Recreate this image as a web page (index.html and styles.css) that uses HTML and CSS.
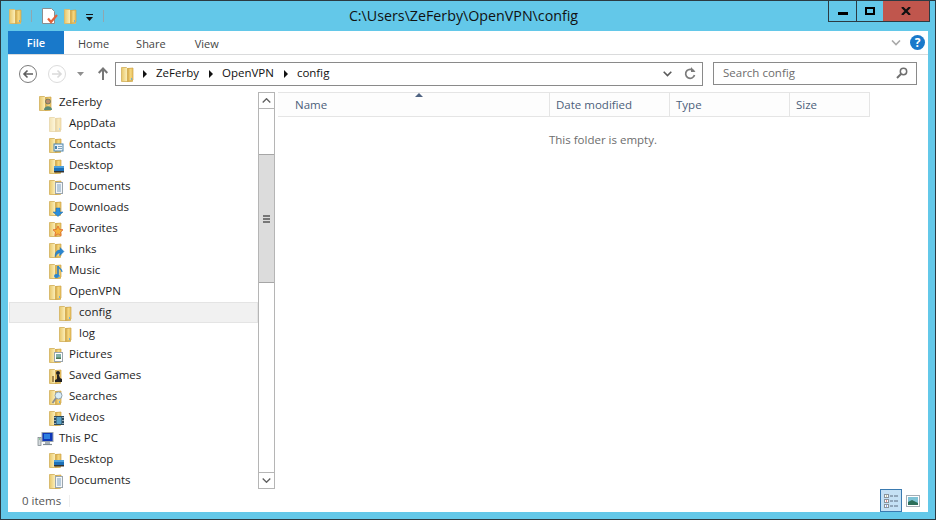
FILE: index.html
```html
<!DOCTYPE html>
<html lang="en">
<head>
<meta charset="utf-8">
<title>config</title>
<link rel="stylesheet" href="styles.css">
</head>
<body>
<svg class="defs" width="0" height="0" aria-hidden="true">
  <defs>
    <linearGradient id="fl" x1="0" x2="1" y1="0" y2="0"><stop offset="0" stop-color="#e8c76a"/><stop offset=".5" stop-color="#fbeeb8"/><stop offset="1" stop-color="#f4dc8e"/></linearGradient>
    <linearGradient id="fr" x1="0" x2="1" y1="0" y2="0"><stop offset="0" stop-color="#cfa03e"/><stop offset=".5" stop-color="#f5d77f"/><stop offset="1" stop-color="#e8c05c"/></linearGradient>
    <symbol id="folder" viewBox="0 0 16 16">
      <path d="M1.500 1.500h5l1 1h5v13h-11z" fill="url(#fl)" stroke="#d9bb6e"/>
      <path d="M7.500 2.500l5.500-.5v12l-5.500 1.500z" fill="url(#fr)" stroke="#cfa548" stroke-width=".7"/>
      <path d="M11 12h1v2h-1z" fill="#6fb2dc"/>
    </symbol>
  </defs>
</svg>
<div class="window">
  <header class="titlebar">
    <div class="qat">
      <svg class="ico" viewBox="0 0 16 16"><use href="#folder"/></svg>
      <span class="qat-sep sep-a"></span>
      <svg class="ico doc" viewBox="0 0 16 16"><path d="M.5.500h9l3 3v12H.5z" fill="#fff" stroke="#8d8d8d"/><path d="M6 10.500l3 3.500 6-7" fill="none" stroke="#e2623a" stroke-width="2.200"/></svg>
      <svg class="ico fold2" viewBox="0 0 16 16"><use href="#folder"/></svg>
      <svg class="qat-drop" viewBox="0 0 7 7"><path d="M0 0h7v1H0zM0 3h7L3.500 7z" fill="#111"/></svg>
      <span class="qat-sep sep-b"></span>
    </div>
    <div class="title">C:\Users\ZeFerby\OpenVPN\config</div>
    <div class="caption">
      <div class="cap cap-min"><span class="glyph-min"></span></div>
      <div class="cap cap-max"><span class="glyph-max"></span></div>
      <div class="cap cap-close"><svg width="10" height="8" viewBox="0 0 10 8"><path d="M1 0l8 8M9 0L1 8" stroke="#111" stroke-width="2.200"/></svg></div>
    </div>
  </header>

  <div class="client">
    <nav class="ribbon">
      <div class="tab-file">File</div>
      <div class="tab tab-home">Home</div>
      <div class="tab tab-share">Share</div>
      <div class="tab tab-view">View</div>
      <svg class="rib-chev" width="10" height="6" viewBox="0 0 10 6"><path d="M1 .5l4 4 4-4" fill="none" stroke="#a9a9a9" stroke-width="1.600"/></svg>
      <div class="help">?</div>
    </nav>

    <div class="navrow">
      <svg class="nav-btn" width="20" height="20" viewBox="0 0 20 20"><circle cx="10" cy="10" r="8.500" fill="#fff" stroke="#7b7b7b"/><path d="M15 10H6M9.500 6.500L6 10l3.500 3.500" fill="none" stroke="#5f5f5f" stroke-width="1.600"/></svg>
      <svg class="nav-btn nav-fwd" width="20" height="20" viewBox="0 0 20 20"><circle cx="10" cy="10" r="8.500" fill="#fff" stroke="#dcdcdc"/><path d="M5 10h9M10.500 6.500L14 10l-3.500 3.500" fill="none" stroke="#dadada" stroke-width="1.600"/></svg>
      <svg class="nav-drop" width="7" height="4" viewBox="0 0 7 4"><path d="M0 0h7L3.500 4z" fill="#8f8f8f"/></svg>
      <svg class="nav-up" width="10" height="13" viewBox="0 0 10 13"><path d="M5 13V2M.7 6L5 1.500 9.300 6" fill="none" stroke="#777" stroke-width="2"/></svg>
      <div class="address">
        <svg class="ico" viewBox="0 0 16 16"><use href="#folder"/></svg>
        <span class="crumb-arrow arrow-first"></span><span class="crumb">ZeFerby</span>
        <span class="crumb-arrow"></span><span class="crumb">OpenVPN</span>
        <span class="crumb-arrow"></span><span class="crumb">config</span>
        <svg class="addr-chev" width="9" height="6" viewBox="0 0 9 6"><path d="M.7.700l3.800 3.800L8.300.700" fill="none" stroke="#5a5a5a" stroke-width="1.600"/></svg>
        <svg class="addr-refresh" width="12" height="13" viewBox="0 0 12 13"><path d="M10 4.500A4.500 4.500 0 1 0 10.500 8" fill="none" stroke="#7b7b7b" stroke-width="1.700"/><path d="M7 0v5h4.500z" fill="#7b7b7b"/></svg>
      </div>
      <div class="search">
        <span class="search-text">Search config</span>
        <svg width="12" height="12" viewBox="0 0 12 12"><circle cx="7.500" cy="4.500" r="3.200" fill="none" stroke="#6f6f6f" stroke-width="1.500"/><path d="M5 7l-4 4" stroke="#6f6f6f" stroke-width="2"/></svg>
      </div>
    </div>

    <main class="panes">
      <div class="tree">
        <div class="row l0"><svg class="ico" viewBox="0 0 16 16"><use href="#folder"/><circle cx="10" cy="6.500" r="2.500" fill="#b98d6c" stroke="#556b5e" stroke-width=".7"/><path d="M6 15c0-5 8-5 8 0z" fill="#5b8a76"/></svg><span>ZeFerby</span></div>
        <div class="row l1"><svg class="ico faded" viewBox="0 0 16 16"><use href="#folder"/></svg><span>AppData</span></div>
        <div class="row l1"><svg class="ico" viewBox="0 0 16 16"><use href="#folder"/><rect x="6" y="7" width="9" height="7" fill="#eef3f8" stroke="#4a84ac"/><path d="M7 9h2v3H7z" fill="#4a84ac"/><path d="M10 9.500h4M10 11.500h4" stroke="#7da3bf"/></svg><span>Contacts</span></div>
        <div class="row l1"><svg class="ico" viewBox="0 0 16 16"><use href="#folder"/><rect x="6" y="8" width="10" height="6" fill="#1c70b8"/><path d="M6 8h10v2H6z" fill="#4da0dc"/><path d="M6 13h10v1.500H6z" fill="#333"/></svg><span>Desktop</span></div>
        <div class="row l1"><svg class="ico" viewBox="0 0 16 16"><use href="#folder"/><rect x="7.500" y="3.500" width="7" height="11" fill="#f4f6f8" stroke="#9aa5ad"/><path d="M9 6h4M9 8h4M9 10h4M9 12h4" stroke="#7aa0c0"/></svg><span>Documents</span></div>
        <div class="row l1"><svg class="ico" viewBox="0 0 16 16"><use href="#folder"/><path d="M8 8h4v4h3l-5 4.500L5 12h3z" fill="#2b8fdc" stroke="#1c69ac" stroke-width=".5"/></svg><span>Downloads</span></div>
        <div class="row l1"><svg class="ico" viewBox="0 0 16 16"><use href="#folder"/><path d="M10 5l1.600 3.400 3.400.400-2.500 2.400.7 3.500-3.200-1.800-3.200 1.800.7-3.500L5 8.800l3.400-.400z" fill="#f5b53c" stroke="#e0662c" stroke-width=".8"/></svg><span>Favorites</span></div>
        <div class="row l1"><svg class="ico" viewBox="0 0 16 16"><use href="#folder"/><path d="M7 15c0-5 2-7 5-7V5.500l4 4-4 4V11c-2 0-3 1-5 4z" fill="#2a86d0" stroke="#1c69ac" stroke-width=".4"/></svg><span>Links</span></div>
        <div class="row l1"><svg class="ico" viewBox="0 0 16 16"><use href="#folder"/><path d="M10 3v10" stroke="#1f75bd" stroke-width="1.500"/><ellipse cx="8.500" cy="13" rx="2.500" ry="2" fill="#2a86d0"/><path d="M10 3c1 3 4 3 4 6" fill="none" stroke="#2a86d0" stroke-width="1.200"/></svg><span>Music</span></div>
        <div class="row l1"><svg class="ico" viewBox="0 0 16 16"><use href="#folder"/></svg><span>OpenVPN</span></div>
        <div class="row l2 row-sel"><svg class="ico" viewBox="0 0 16 16"><use href="#folder"/></svg><span>config</span></div>
        <div class="row l2"><svg class="ico" viewBox="0 0 16 16"><use href="#folder"/></svg><span>log</span></div>
        <div class="row l1"><svg class="ico" viewBox="0 0 16 16"><use href="#folder"/><rect x="6.500" y="5.500" width="8" height="9" fill="#fff" stroke="#9aa5ad"/><rect x="8" y="7" width="5" height="5" fill="#7fb0a8"/><path d="M8 10.500h5V12H8z" fill="#4d7a52"/></svg><span>Pictures</span></div>
        <div class="row l1"><svg class="ico" viewBox="0 0 16 16"><use href="#folder"/><circle cx="10" cy="5" r="2" fill="#222"/><path d="M9 7h2l1 3 2 1v3H7v-2l2-1z" fill="#222"/><path d="M5 8v6" stroke="#8a6a30" stroke-width="1.500"/></svg><span>Saved Games</span></div>
        <div class="row l1"><svg class="ico" viewBox="0 0 16 16"><use href="#folder"/><circle cx="10.500" cy="6.500" r="3.500" fill="#d8ecf6" stroke="#8fa2ad"/><path d="M8 9l-3.500 5" stroke="#8b8f92" stroke-width="1.800"/></svg><span>Searches</span></div>
        <div class="row l1"><svg class="ico" viewBox="0 0 16 16"><use href="#folder"/><rect x="6" y="6" width="10" height="9" fill="#2d4b5e"/><rect x="8.500" y="7" width="5" height="7" fill="#5aa2c8"/><path d="M7 7v1M7 10v1M7 13v1M15 7v1M15 10v1M15 13v1" stroke="#dfe8ee" stroke-width="1.200"/></svg><span>Videos</span></div>
        <div class="row l0"><svg class="ico pc" viewBox="0 0 16 16"><rect x="4" y="1.500" width="11" height="9" fill="#0f37b8" stroke="#9aa4ad"/><path d="M6 3h6v5H6z" fill="#2d7fe0"/><path d="M7 11h5v2H7z" fill="#aab3ba"/><path d="M5 13.500h9" stroke="#7f8a92" stroke-width="1.200"/><rect x="0" y="6.500" width="3" height="8" fill="#d4dadd" stroke="#757f85" stroke-width=".7"/><path d="M1 8h1" stroke="#3eaf4a"/></svg><span>This PC</span></div>
        <div class="row l1"><svg class="ico" viewBox="0 0 16 16"><use href="#folder"/><rect x="6" y="8" width="10" height="6" fill="#1c70b8"/><path d="M6 8h10v2H6z" fill="#4da0dc"/><path d="M6 13h10v1.500H6z" fill="#333"/></svg><span>Desktop</span></div>
        <div class="row l1"><svg class="ico" viewBox="0 0 16 16"><use href="#folder"/><rect x="7.500" y="3.500" width="7" height="11" fill="#f4f6f8" stroke="#9aa5ad"/><path d="M9 6h4M9 8h4M9 10h4M9 12h4" stroke="#7aa0c0"/></svg><span>Documents</span></div>
      </div>

      <div class="scrollbar">
        <div class="sb-btn"><svg width="9" height="5" viewBox="0 0 9 5"><path d="M.7 4.500l3.800-3.800 3.800 3.800" fill="none" stroke="#606060" stroke-width="1.300"/></svg></div>
        <div class="sb-track">
          <div class="sb-thumb"><span class="grip"></span></div>
        </div>
        <div class="sb-btn sb-down"><svg width="9" height="5" viewBox="0 0 9 5"><path d="M.7.500l3.800 3.800L8.300.500" fill="none" stroke="#606060" stroke-width="1.300"/></svg></div>
      </div>

      <section class="list">
        <div class="headers">
          <div class="col col-name">Name<span class="sort"></span></div>
          <div class="col col-date">Date modified</div>
          <div class="col col-type">Type</div>
          <div class="col col-size">Size</div>
        </div>
        <p class="empty">This folder is empty.</p>
      </section>
    </main>

    <footer class="status">
      <span class="count">0 items</span>
      <span class="status-sep"></span>
      <div class="view-btn">
        <svg width="14" height="14" viewBox="0 0 14 14">
          <rect x=".5" y=".5" width="4" height="3" fill="#fff" stroke="#8a949c"/><rect x=".5" y="5.500" width="4" height="3" fill="#fff" stroke="#8a949c"/><rect x=".5" y="10.500" width="4" height="3" fill="#fff" stroke="#8a949c"/>
          <path d="M2 1.500h1v1H2z" fill="#7a8a50"/><path d="M2 6.500h1v1H2z" fill="#d02020"/><path d="M2 11.500h1v1H2z" fill="#1f4fd0"/>
          <path d="M6 2h3M10 2h4M6 7h3M10 7h4M6 12h3M10 12h4" stroke="#5c6c80"/>
        </svg>
      </div>
      <svg class="view-pic" width="14" height="12" viewBox="0 0 14 12"><rect x=".5" y=".5" width="13" height="11" fill="#fff" stroke="#a4adb5"/><rect x="2" y="2" width="10" height="8" fill="#7fc3d6"/><path d="M2 7l4-2 6 3v2H2z" fill="#2c6f5a"/></svg>
    </footer>
  </div>
</div>
</body>
</html>
```
FILE: styles.css
```css
* { box-sizing: border-box; }
html, body { margin: 0; padding: 0; }
body { width: 936px; height: 520px; overflow: hidden; font-family: "Open Sans", "Noto Sans", sans-serif; font-size: 11.500px; color: #1e1e1e; }
.defs { position: absolute; }
.ico { width: 16px; height: 16px; flex: none; display: block; overflow: visible; }
.faded { opacity: .5; }

.window { width: 936px; height: 520px; display: flex; flex-direction: column; background: #63c8e9; border: 1px solid #2b3a42; }

.titlebar { height: 30px; flex: none; display: flex; align-items: flex-start; }
.qat { width: 109px; flex: none; display: flex; align-items: center; height: 30px; padding-left: 7px; }
.qat-sep { width: 1px; height: 12px; background: #8fa7b0; flex: none; }
.sep-a { margin-left: 7px; }
.doc { margin-left: 10px; }
.fold2 { margin-left: 5px; }
.qat-drop { width: 7px; height: 7px; margin-left: 7px; margin-top: 2px; flex: none; }
.sep-b { margin-left: 10px; }
.title { flex: 1; text-align: center; font-size: 14.250px; line-height: 30px; color: #111; padding-right: 11px; white-space: nowrap; }
.caption { display: flex; flex: none; height: 21px; margin-right: 5px; border: 1px solid #2b3a42; border-top: 0; }
.cap { display: flex; align-items: center; justify-content: center; height: 100%; }
.cap-min { width: 28px; border-right: 1px solid #2b3a42; }
.cap-max { width: 26px; }
.cap-close { width: 46px; background: #c0564d; }
.glyph-min { width: 10px; height: 3px; background: #000; margin-top: 5px; }
.glyph-max { width: 10px; height: 8px; border: 2px solid #000; }

.client { flex: 1; min-height: 0; margin: 0 7px 7px; background: #fff; display: flex; flex-direction: column; }

.ribbon { height: 24px; flex: none; display: flex; align-items: center; border-bottom: 1px solid #dadbdc; }
.tab-file { width: 56px; height: 23px; background: #1979ca; color: #fff; font-weight: 600; font-size: 11px; line-height: 23px; text-align: center; flex: none; }
.tab { font-size: 11px; color: #444; flex: none; line-height: 25px; height: 23px; }
.tab-home { margin-left: 14px; }
.tab-share { margin-left: 27px; }
.tab-view { margin-left: 29px; }
.rib-chev { margin-left: auto; flex: none; }
.help { width: 15px; height: 15px; margin: 0 3px 0 9px; border-radius: 50%; background: #1979ca; color: #fff; font-weight: 700; font-size: 12px; line-height: 15px; text-align: center; flex: none; }

.navrow { height: 37px; flex: none; display: flex; align-items: center; padding-left: 10px; }
.nav-btn { flex: none; display: block; }
.nav-fwd { margin-left: 9px; }
.nav-drop { flex: none; margin-left: 10px; }
.nav-up { flex: none; margin-left: 14px; }
.address { width: 588px; height: 24px; margin-left: 7px; border: 1px solid #8a8a8a; display: flex; align-items: center; padding-left: 4px; flex: none; }
.crumb { color: #111; white-space: nowrap; margin-top: -2px; }
.crumb-arrow { width: 0; height: 0; border-left: 4px solid #111; border-top: 4px solid transparent; border-bottom: 4px solid transparent; margin: 0 9px 0 10px; flex: none; }
.arrow-first { margin-left: 7px; }
.addr-chev { margin-left: auto; flex: none; }
.addr-refresh { margin: 0 6px 0 12px; flex: none; }
.search { width: 204px; height: 23px; margin-left: 10px; margin-top: -1px; border: 1px solid #8a8a8a; display: flex; align-items: center; justify-content: space-between; padding: 0 8px 0 9px; flex: none; }
.search-text { color: #6d6d6d; margin-top: -2px; }

.panes { flex: 1; min-height: 0; display: flex; }
.tree { width: 250px; flex: none; overflow: hidden; }
.row { height: 21px; display: flex; align-items: center; gap: 5px; white-space: nowrap; color: #1e1e1e; }
.row span { margin-top: -2px; }
.l0 { padding-left: 30px; }
.l1 { padding-left: 40px; }
.l2 { padding-left: 50px; }
.row-sel { background: #f1f1f1; box-shadow: inset 0 0 0 1px #e4e4e4; margin-left: 1px; padding-left: 49px; }

.scrollbar { width: 17px; flex: none; display: flex; flex-direction: column; border-left: 1px solid #b5b5b5; border-right: 1px solid #b5b5b5; height: 397px; }
.sb-btn { height: 17px; flex: none; display: flex; align-items: center; justify-content: center; border-top: 1px solid #b5b5b5; border-bottom: 1px solid #b5b5b5; }
.sb-track { flex: 1; min-height: 0; padding-top: 45px; }
.sb-thumb { height: 129px; background: #dcdcdc; border-top: 1px solid #a6a6a6; border-bottom: 1px solid #a6a6a6; display: flex; align-items: center; justify-content: center; }
.grip { width: 7px; height: 8px; display: block; background: repeating-linear-gradient(#777 0 2px, transparent 2px 3px); }

.list { flex: 1; min-width: 0; padding-left: 3px; }
.headers { width: 592px; height: 25px; display: flex; background: #fdfdfd; border-top: 1px solid #e5e5e5; border-bottom: 1px solid #e5e5e5; }
.col { color: #4c607a; line-height: 23px; height: 23px; padding-left: 6px; border-right: 1px solid #e5e5e5; flex: none; position: relative; }
.col-name { width: 272px; padding-left: 17px; }
.col-date { width: 120px; }
.col-type { width: 120px; }
.col-size { width: 80px; }
.sort { position: absolute; left: 137px; top: 0; width: 0; height: 0; border-left: 4px solid transparent; border-right: 4px solid transparent; border-bottom: 4px solid #4f6382; }
.empty { margin: 15px 0 0; text-align: center; color: #6d6d6d; }

.status { height: 22px; flex: none; display: flex; align-items: center; padding-left: 14px; color: #555; }
.count { flex: none; margin-top: -1px; }
.status-sep { width: 1px; height: 12px; background: #eee; margin-left: 8px; flex: none; }
.view-btn { width: 22px; height: 23px; margin-left: auto; margin-top: -1px; background: #c5e1f5; border: 1px solid #3a7ab0; display: flex; align-items: center; justify-content: center; flex: none; }
.view-pic { margin: 0 8px 0 4px; flex: none; }
```
